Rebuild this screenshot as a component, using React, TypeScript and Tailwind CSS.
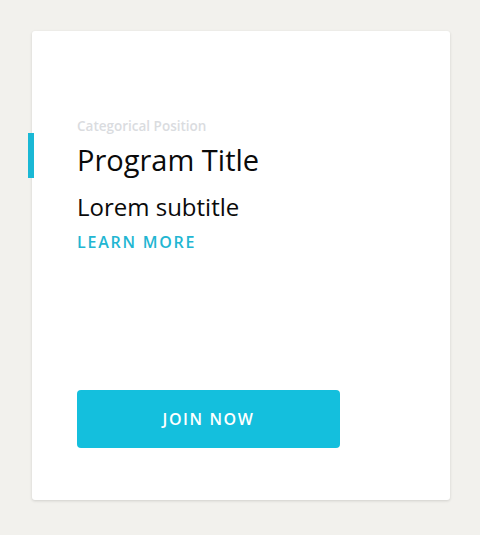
export default function App() {
  return (
    <div className="min-h-[535px] bg-[#f2f1ed] pt-[31px] pl-[32px] font-['Open_Sans',sans-serif]">
      <div className="relative flex h-[469px] w-[418px] flex-col rounded-[3px] bg-white pl-[45px] pt-[86px] pb-[52px] shadow-[0_1px_3px_rgba(0,0,0,0.14)]">
        <span className="absolute left-[-4px] top-[102px] h-[45px] w-[6px] bg-[#1ab8d5]" />
        <p className="text-[13.5px] leading-[18px] font-semibold text-[#dadcdf]">Categorical Position</p>
        <h2 className="mt-[7px] text-[29px] leading-[36px] text-[#0a0a0a]">Program Title</h2>
        <p className="mt-[13px] text-[24px] leading-[32px] text-[#0a0a0a]">Lorem subtitle</p>
        <a className="mt-[8px] text-[16px] leading-[22px] font-semibold tracking-[0.11em] text-[#22b6d2]">
          LEARN MORE
        </a>
        <button className="mt-auto h-[58px] w-[263px] rounded-[4px] bg-[#14bfdd] text-[16px] font-semibold tracking-[0.1em] text-white">
          JOIN NOW
        </button>
      </div>
    </div>
  );
}
